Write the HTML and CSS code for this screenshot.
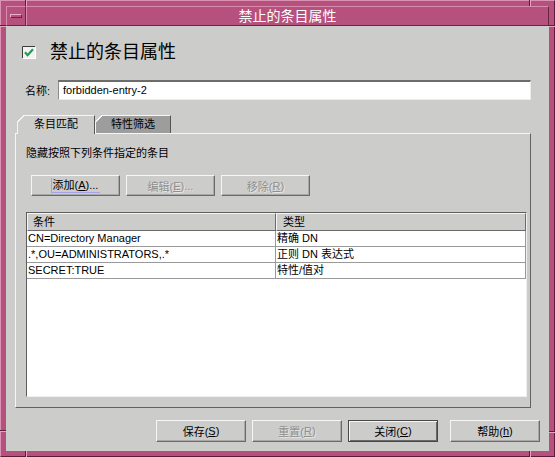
FILE: index.html
```html
<!DOCTYPE html>
<html>
<head>
<meta charset="utf-8">
<link rel="stylesheet" href="styles.css">
</head>
<body>
<div class="window">
  <span class="mark mv m-tl"></span>
  <span class="mark mv m-tr"></span>
  <span class="mark mv m-bl"></span>
  <span class="mark mv m-br"></span>
  <span class="mark mh m-lt"></span>
  <span class="mark mh m-lb"></span>
  <span class="mark mh m-rt"></span>
  <span class="mark mh m-rb"></span>
  <div class="titlebar">
    <div class="menubtn"><span class="menubar"></span></div>
    <div class="title">禁止的条目属性</div>
  </div>
  <div class="content">
    <div class="header">
      <svg class="checkbox" width="14" height="13" viewBox="0 0 14 13">
        <rect x="0" y="0" width="14" height="13" fill="#f2f2f2"/>
        <path d="M0.5 12.5 V0.5 H13.5" fill="none" stroke="#3c3c3c"/>
        <path d="M13.5 0.5 V12.5 H0.5" fill="none" stroke="#ffffff"/>
        <path d="M3 6.2 L5.6 9.2 L11 3.2" fill="none" stroke="#1e9a58" stroke-width="2.2"/>
      </svg>
      <span class="htext">禁止的条目属性</span>
    </div>
    <div class="namerow">
      <span class="label">名称:</span>
      <div class="input">forbidden-entry-2</div>
    </div>
    <div class="tabs">
      <div class="tab active">条目匹配</div>
      <div class="tab inactive">特性筛选</div>
    </div>
    <div class="panel">
      <div class="desc">隐藏按照下列条件指定的条目</div>
      <div class="btnrow">
        <div class="btn"><span class="focus">添加(<u>A</u>)...</span></div>
        <div class="btn disabled">编辑(<u>E</u>)...</div>
        <div class="btn disabled">移除(<u>R</u>)</div>
      </div>
      <div class="table">
        <div class="row head">
          <div class="cell">条件</div>
          <div class="cell">类型</div>
        </div>
        <div class="row">
          <div class="cell">CN=Directory Manager</div>
          <div class="cell">精确 DN</div>
        </div>
        <div class="row">
          <div class="cell">.*,OU=ADMINISTRATORS,.*</div>
          <div class="cell">正则 DN 表达式</div>
        </div>
        <div class="row">
          <div class="cell">SECRET:TRUE</div>
          <div class="cell">特性/值对</div>
        </div>
      </div>
    </div>
    <div class="footer">
      <div class="btn wide">保存(<u>S</u>)</div>
      <div class="btn wide disabled">重置(<u>R</u>)</div>
      <div class="btn wide default">关闭(<u>C</u>)</div>
      <div class="btn wide help">帮助(<u>h</u>)</div>
    </div>
  </div>
</div>
</body>
</html>
```

FILE: styles.css
```css
* { box-sizing: border-box; }
body { margin: 0; background: #ffffff; }

.window {
  position: relative;
  width: 555px;
  height: 457px;
  background: #b5517c;
  border: 1px solid;
  border-color: #dc93b3 #5c1d3a #5c1d3a #dc93b3;
  padding: 5px;
  display: flex;
  flex-direction: column;
  font-family: "Liberation Sans", "Noto Sans CJK SC", sans-serif;
  color: #000;
}

.mark { position: absolute; }
.mv { width: 2px; height: 6px; border-left: 1px solid #5c1d3a; border-right: 1px solid #e6a4c1; }
.mh { width: 6px; height: 2px; border-top: 1px solid #5c1d3a; border-bottom: 1px solid #e6a4c1; }
.m-tl { left: 24px; top: -1px; }
.m-tr { left: 528px; top: -1px; }
.m-bl { left: 24px; bottom: -1px; }
.m-br { left: 528px; bottom: -1px; }
.m-lt { left: -1px; top: 24px; }
.m-lb { left: -1px; top: 429px; }
.m-rt { right: -1px; top: 24px; }
.m-rb { right: -1px; top: 430px; }

.titlebar {
  height: 20px;
  display: flex;
}
.menubtn {
  width: 20px;
  border: 1px solid;
  border-color: #d98cae #6a2444 #6a2444 #d98cae;
  display: flex;
  align-items: center;
  justify-content: center;
}
.menubar {
  width: 12px;
  height: 4px;
  border: 1px solid;
  border-color: #eab0c8 #6a2444 #6a2444 #eab0c8;
}
.title {
  flex: 1;
  border: 1px solid;
  border-color: #d98cae #6a2444 #6a2444 #d98cae;
  color: #ffffff;
  font-size: 14px;
  line-height: 18px;
  text-align: center;
}

.content {
  flex: 1;
  background: #cccccb;
  display: flex;
  flex-direction: column;
}

.header {
  margin-top: 15px;
  margin-left: 16px;
  height: 22px;
  display: flex;
  align-items: center;
  gap: 14px;
}
.checkbox { display: block; margin-top: 1px; }
.htext { font-size: 18px; line-height: 22px; }

.namerow {
  margin-top: 17px;
  margin-left: 19px;
  height: 20px;
  display: flex;
  align-items: center;
}
.label { width: 33px; font-size: 11px; }
.input {
  width: 473px;
  height: 20px;
  background: #ffffff;
  border-top: 2px solid #6c6c6c;
  border-left: 1px solid #8c8c8c;
  border-right: 1px solid #ececec;
  border-bottom: 1px solid #ececec;
  padding-left: 4px;
  font-size: 11px;
  line-height: 17px;
}

.tabs {
  margin-top: 15px;
  margin-left: 2px;
  padding-left: 9px;
  height: 18px;
  display: flex;
  align-items: flex-end;
}
.tab {
  position: relative;
  height: 18px;
  font-size: 11px;
  line-height: 16px;
  padding-left: 16px;
  border-top: 1px solid #f6f6f6;
  border-left: 1px solid #f6f6f6;
  border-right: 1px solid #555555;
}
.tab::before {
  content: "";
  position: absolute;
  left: -1px;
  top: -1px;
  width: 7px;
  height: 7px;
  background: linear-gradient(135deg, #cccccb 0 46%, #f6f6f6 46% 60%, transparent 60%);
}
.tab.active {
  width: 78px;
  height: 19px;
  margin-bottom: -1px;
  background: #cccccb;
  z-index: 1;
}
.tab.inactive {
  width: 76px;
  background: #9d9d9d;
  padding-left: 15px;
}

.panel {
  height: 275px;
  margin-left: 9px;
  width: 516px;
  border: 1px solid;
  border-color: #f6f6f6 #626262 #626262 #f6f6f6;
  padding: 0 3px 0 10px;
  display: flex;
  flex-direction: column;
}
.desc {
  margin-top: 12px;
  font-size: 11px;
  line-height: 14px;
}
.btnrow {
  margin-top: 15px;
  margin-left: 5px;
  display: flex;
  gap: 6px;
}

.btn {
  width: 89px;
  height: 21px;
  background: #cccccb;
  border: 1px solid;
  border-color: #f6f6f6 #6a6a6a #6a6a6a #f6f6f6;
  box-shadow: inset -1px -1px 0 #a8a8a8;
  font-size: 11px;
  display: flex;
  align-items: center;
  justify-content: center;
}
.btn u { text-underline-offset: 1px; }
.btn.disabled { color: #8f8f8f; text-shadow: 1px 1px 0 #e6e6e6; }
.focus {
  border-left: 1px solid #a3a3e6;
  border-bottom: 1px solid #a3a3e6;
  padding: 1px 2px 0 1px;
  line-height: 13px;
}

.table {
  margin-top: 16px;
  height: 185px;
  background: #ffffff;
  border: 1px solid;
  border-color: #5e5e5e #efefef #efefef #5e5e5e;
}
.row {
  display: grid;
  grid-template-columns: 249px 1fr;
  height: 16px;
  border-bottom: 1px solid #9a9a9a;
  border-right: 1px solid #9a9a9a;
  font-size: 11px;
  line-height: 15px;
}
.row .cell { padding-left: 1px; white-space: nowrap; overflow: hidden; }
.row .cell:first-child { border-right: 1px solid #9a9a9a; }
.row.head {
  height: 18px;
  border: none;
}
.row.head .cell {
  background: #cccccb;
  border: 1px solid;
  border-color: #f6f6f6 #6a6a6a #6a6a6a #f6f6f6;
  padding-left: 5px;
  line-height: 16px;
}
.row.head .cell + .cell { padding-left: 6px; }

.footer {
  margin-top: 12px;
  padding-right: 9px;
  display: flex;
  justify-content: flex-end;
  gap: 6px;
}
.btn.wide { width: 90px; height: 22px; }
.btn.help { margin-left: 6px; }
.btn.default {
  border-color: #474747;
  box-shadow: inset 1px 1px 0 #f6f6f6, inset -1px -1px 0 #6a6a6a;
}
```
